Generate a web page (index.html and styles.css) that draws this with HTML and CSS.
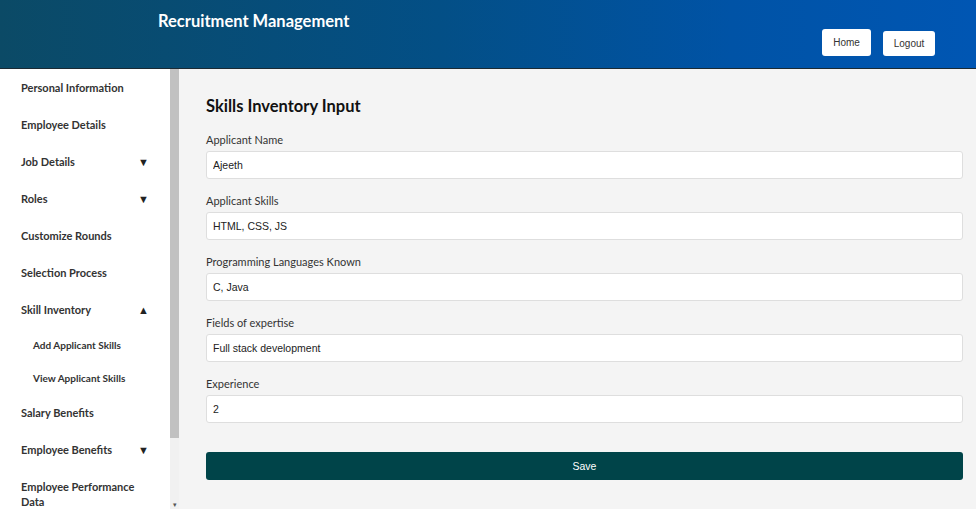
FILE: index.html
```html
<!DOCTYPE html>
<html lang="en">
<head>
<meta charset="utf-8">
<title>Recruitment Management</title>
<link rel="stylesheet" href="styles.css">
</head>
<body>
<header class="topbar">
  <h1 class="brand">Recruitment Management</h1>
  <div class="top-actions">
    <button class="top-btn home">Home</button>
    <button class="top-btn logout">Logout</button>
  </div>
</header>
<div class="layout">
  <aside class="sidebar">
    <nav class="nav">
      <div class="nav-item">Personal Information</div>
      <div class="nav-item">Employee Details</div>
      <div class="nav-item">Job Details <span class="caret">&#9660;</span></div>
      <div class="nav-item">Roles <span class="caret">&#9660;</span></div>
      <div class="nav-item">Customize Rounds</div>
      <div class="nav-item">Selection Process</div>
      <div class="nav-item">Skill Inventory <span class="caret">&#9650;</span></div>
      <div class="nav-sub">Add Applicant Skills</div>
      <div class="nav-sub">View Applicant Skills</div>
      <div class="nav-item">Salary Benefits</div>
      <div class="nav-item">Employee Benefits <span class="caret">&#9660;</span></div>
      <div class="nav-item multi">Employee Performance Data</div>
    </nav>
    <div class="scrollbar">
      <div class="thumb"></div>
      <div class="track"><span class="arrow">&#9662;</span></div>
    </div>
  </aside>
  <main class="content">
    <h2 class="title">Skills Inventory Input</h2>
    <form class="form">
      <label class="field"><span class="label">Applicant Name</span><input class="input" value="Ajeeth"></label>
      <label class="field"><span class="label">Applicant Skills</span><input class="input" value="HTML, CSS, JS"></label>
      <label class="field"><span class="label">Programming Languages Known</span><input class="input" value="C, Java"></label>
      <label class="field"><span class="label">Fields of expertise</span><input class="input" value="Full stack development"></label>
      <label class="field"><span class="label">Experience</span><input class="input" value="2"></label>
      <button type="button" class="save">Save</button>
    </form>
  </main>
</div>
</body>
</html>
```
FILE: styles.css
```css
* { box-sizing: border-box; }
html, body { margin: 0; padding: 0; height: 100%; overflow: hidden; }
body {
  font-family: Lato, "Open Sans", sans-serif;
  background: #f4f4f4;
  color: #222;
}
.topbar {
  height: 69px;
  display: flex;
  justify-content: space-between;
  background: linear-gradient(90deg, #0b4a66 0%, #034f86 45%, #0053a6 75%, #0056b3 100%);
  border-bottom: 1px solid #1b2a33;
}
.brand {
  margin: 0;
  padding: 10px 0 0 158px;
  font-size: 16.5px;
  line-height: 22px;
  font-weight: 700;
  color: #fff;
}
.top-actions {
  display: flex;
  align-items: flex-end;
  gap: 12px;
  padding: 0 41px 12px 0;
}
.top-btn {
  background: #fff;
  border: none;
  border-radius: 3px;
  font-family: "Liberation Sans", Arial, sans-serif;
  font-size: 10px;
  color: #333;
  padding: 0;
}
.home { width: 49px; height: 27px; }
.logout { width: 52px; height: 25px; }
.layout {
  display: flex;
  height: 440px;
}
.sidebar {
  width: 179px;
  display: flex;
  background: #fff;
  flex-shrink: 0;
}
.nav {
  width: 170px;
  overflow: hidden;
}
.nav-item {
  display: flex;
  justify-content: space-between;
  align-items: center;
  height: 37px;
  padding: 0 21px;
  font-size: 11px;
  font-weight: 700;
  color: #333;
}
.nav-item.multi {
  height: auto;
  padding-top: 11px;
  line-height: 15px;
  padding-right: 30px;
}
.caret { font-size: 11px; color: #222; }
.nav-sub {
  height: 33px;
  display: flex;
  align-items: center;
  padding-left: 33px;
  font-size: 10px;
  font-weight: 700;
  color: #333;
}
.scrollbar {
  width: 9px;
  display: flex;
  flex-direction: column;
  background: #f1f1f1;
}
.thumb { height: 369px; background: #c1c1c1; }
.track {
  flex: 1;
  display: flex;
  align-items: flex-end;
  justify-content: center;
}
.arrow { font-size: 7px; color: #555; line-height: 10px; }
.content {
  flex: 1;
  padding: 26px 13px 0 27px;
}
.title {
  margin: 0 0 16px;
  font-size: 16.5px;
  font-weight: 700;
  color: #111;
  line-height: 22px;
}
.form { display: flex; flex-direction: column; }
.field {
  display: flex;
  flex-direction: column;
  gap: 4px;
  margin-bottom: 15px;
}
.label {
  font-size: 11px;
  line-height: 14px;
  color: #333;
}
.input {
  height: 28px;
  border: 1px solid #dedede;
  border-radius: 3px;
  background: #fff;
  padding: 0 6px;
  font-family: "Liberation Sans", Arial, sans-serif;
  font-size: 10.5px;
  color: #222;
}
.save {
  margin-top: 14px;
  height: 28px;
  border: none;
  border-radius: 3px;
  background: #004449;
  color: #fff;
  font-family: "Liberation Sans", Arial, sans-serif;
  font-size: 10.5px;
}
```
